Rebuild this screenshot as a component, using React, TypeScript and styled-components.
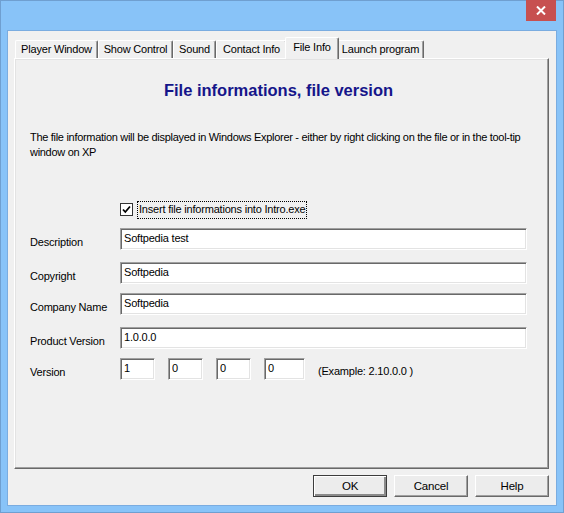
import React from 'react';
import styled, { createGlobalStyle, css } from 'styled-components';

const UI_FONT = `"Liberation Sans", Arial, sans-serif`;

const GlobalStyle = createGlobalStyle`
  html, body {
    margin: 0;
    padding: 0;
  }
  body {
    width: 564px;
    height: 513px;
    overflow: hidden;
    font-family: ${UI_FONT};
  }
`;

const Window = styled.div`
  box-sizing: border-box;
  width: 564px;
  height: 513px;
  background: #88c3f8;
  border: 1px solid #6f9fd0;
  display: flex;
  flex-direction: column;
  font-family: ${UI_FONT};
  font-size: 11px;
  letter-spacing: -0.2px;
  color: #000;
`;

const TitleBar = styled.div`
  height: 29px;
  flex: none;
  display: flex;
  justify-content: flex-end;
  align-items: flex-start;
`;

const CloseButton = styled.div`
  width: 30px;
  height: 21px;
  margin: -1px 7px 0 0;
  background: #c75050;
  display: flex;
  align-items: center;
  justify-content: center;
`;

const Client = styled.div`
  flex: 1;
  margin: 0 6px 6px;
  background: #f0f0f0;
  border: 1px solid #7aace0;
  display: flex;
  flex-direction: column;
  padding: 6px 7px 0 6px;
  min-height: 0;
`;

const TabStrip = styled.div`
  height: 21px;
  flex: none;
  display: flex;
  align-items: flex-end;
  padding-left: 1px;
  position: relative;
  z-index: 1;
`;

const Tab = styled.div<{ $width: number; $active?: boolean }>`
  box-sizing: border-box;
  width: ${(p) => p.$width}px;
  height: 18px;
  display: flex;
  align-items: center;
  justify-content: center;
  background: #f0f0f0;
  border-top: 1px solid #fff;
  border-left: 1px solid #fff;
  border-right: 1px solid #696969;
  border-radius: 2px 2px 0 0;
  box-shadow: inset -1px 0 #a0a0a0;
  white-space: nowrap;
  padding-bottom: 1px;

  ${(p) =>
    p.$active &&
    css`
      width: ${p.$width + 4}px;
      height: 22px;
      margin: 0 -2px -1px;
      position: relative;
      z-index: 2;
      padding-bottom: 4px;
    `}
`;

const Panel = styled.div`
  flex: 1;
  min-height: 0;
  background: #f0f0f0;
  border: 1px solid;
  border-color: #fff #696969 #696969 #fff;
  box-shadow: inset -1px -1px #a0a0a0, inset 1px 1px #e3e3e3;
  display: flex;
  flex-direction: column;
  padding: 21px 21px 0 15px;
`;

const Heading = styled.h1`
  margin: 0;
  font-family: ${UI_FONT};
  font-size: 16.5px;
  line-height: 20px;
  font-weight: bold;
  letter-spacing: 0;
  text-align: center;
  color: #15158a;
`;

const Intro = styled.p`
  margin: 30px 0 0;
  line-height: 15px;
  white-space: nowrap;
  letter-spacing: -0.3px;
`;

const CheckRow = styled.label`
  display: flex;
  align-items: center;
  gap: 4px;
  margin: 41px 0 0 90px;
  height: 17px;
`;

const CheckBox = styled.span`
  box-sizing: border-box;
  width: 13px;
  height: 13px;
  border: 1px solid #333;
  background: #fff;
  display: flex;
  align-items: center;
  justify-content: center;
`;

const FocusLabel = styled.span`
  border: 1px dotted #000;
  padding: 1px 1px 2px;
  line-height: 13px;
`;

const FieldRow = styled.div<{ $space: number }>`
  display: flex;
  align-items: center;
  margin-top: ${(p) => p.$space}px;
`;

const FieldLabel = styled.span`
  width: 90px;
  flex: none;
  padding-top: 6px;
`;

const TextBox = styled.input<{ $width?: number }>`
  box-sizing: border-box;
  height: 22px;
  ${(p) => (p.$width ? `width: ${p.$width}px; flex: none;` : 'flex: 1; min-width: 0;')}
  margin: 0;
  padding: 0 3px 2px;
  border: 1px solid;
  border-color: #a0a0a0 #fff #fff #a0a0a0;
  box-shadow: inset 1px 1px #696969, inset -1px -1px #e3e3e3;
  background: #fff;
  font-family: ${UI_FONT};
  font-size: 11px;
  letter-spacing: -0.2px;
  color: #000;
  outline: none;
`;

const VersionGroup = styled.div`
  display: flex;
  align-items: center;
  gap: 13px;
`;

const Hint = styled.span`
  padding-top: 4px;
`;

const Footer = styled.div`
  flex: none;
  display: flex;
  justify-content: flex-end;
  gap: 7px;
  padding: 6px 0 8px;
`;

const Button = styled.button<{ $isDefault?: boolean }>`
  box-sizing: border-box;
  width: 74px;
  height: 22px;
  margin: 0;
  padding: 0 0 1px;
  background: #ececec;
  border: 1px solid;
  border-color: #fff #696969 #696969 #fff;
  box-shadow: inset -1px -1px #a0a0a0;
  font-family: ${UI_FONT};
  font-size: 11.5px;
  letter-spacing: -0.2px;
  color: #000;

  ${(p) =>
    p.$isDefault &&
    css`
      border-color: #3c3c3c;
      box-shadow: inset 1px 1px #fff, inset -2px -2px #8a8a8a;
    `}
`;

const tabs = [
  { label: 'Player Window', width: 83 },
  { label: 'Show Control', width: 75 },
  { label: 'Sound', width: 43 },
  { label: 'Contact Info', width: 71 },
  { label: 'File Info', width: 50, active: true },
  { label: 'Launch program', width: 87 },
];

const fields = [
  { label: 'Description', value: 'Softpedia test', space: 10 },
  { label: 'Copyright', value: 'Softpedia', space: 12 },
  { label: 'Company Name', value: 'Softpedia', space: 9 },
  { label: 'Product Version', value: '1.0.0.0', space: 12 },
];

const versionParts = [
  { value: '1', width: 35 },
  { value: '0', width: 35 },
  { value: '0', width: 35 },
  { value: '0', width: 41 },
];

export default function App() {
  return (
    <>
      <GlobalStyle />
      <Window>
        <TitleBar>
          <CloseButton>
            <svg width="10" height="9" viewBox="0 0 10 9">
              <path d="M1 0.5 L9 8.5 M9 0.5 L1 8.5" stroke="#fff" strokeWidth="2" />
            </svg>
          </CloseButton>
        </TitleBar>
        <Client>
          <TabStrip>
            {tabs.map((t) => (
              <Tab key={t.label} $width={t.width} $active={t.active}>
                {t.label}
              </Tab>
            ))}
          </TabStrip>
          <Panel>
            <Heading>File informations, file version</Heading>
            <Intro>
              The file information will be displayed in Windows Explorer - either by right clicking on the file or in the tool-tip
              <br />
              window on XP
            </Intro>
            <CheckRow>
              <CheckBox>
                <svg width="9" height="9" viewBox="0 0 9 9">
                  <path d="M1 4.5 L3.3 7 L8 1.5" stroke="#000" strokeWidth="1.8" fill="none" />
                </svg>
              </CheckBox>
              <FocusLabel>Insert file informations into Intro.exe</FocusLabel>
            </CheckRow>
            {fields.map((f) => (
              <FieldRow key={f.label} $space={f.space}>
                <FieldLabel>{f.label}</FieldLabel>
                <TextBox readOnly defaultValue={f.value} />
              </FieldRow>
            ))}
            <FieldRow $space={9}>
              <FieldLabel>Version</FieldLabel>
              <VersionGroup>
                {versionParts.map((v, i) => (
                  <TextBox key={i} readOnly defaultValue={v.value} $width={v.width} />
                ))}
                <Hint>(Example: 2.10.0.0 )</Hint>
              </VersionGroup>
            </FieldRow>
          </Panel>
          <Footer>
            <Button $isDefault>OK</Button>
            <Button>Cancel</Button>
            <Button>Help</Button>
          </Footer>
        </Client>
      </Window>
    </>
  );
}
